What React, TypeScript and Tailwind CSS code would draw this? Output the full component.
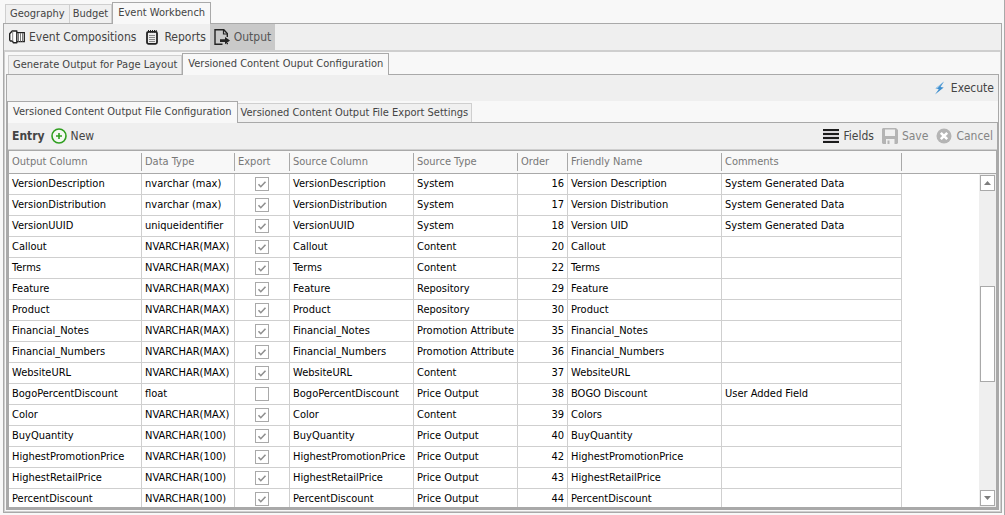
import type { ReactNode } from "react";

type Row = {
  column: string;
  type: string;
  exported: boolean;
  source: string;
  order: number;
  friendly: string;
  comment?: string;
};

const row = (
  column: string,
  type: string,
  source: string,
  order: number,
  friendly: string,
  comment = "",
  exported = true,
): Row => ({ column, type, source, order, friendly, comment, exported });

const rows: Row[] = [
  row("VersionDescription", "nvarchar (max)", "System", 16, "Version Description", "System Generated Data"),
  row("VersionDistribution", "nvarchar (max)", "System", 17, "Version Distribution", "System Generated Data"),
  row("VersionUUID", "uniqueidentifier", "System", 18, "Version UID", "System Generated Data"),
  row("Callout", "NVARCHAR(MAX)", "Content", 20, "Callout"),
  row("Terms", "NVARCHAR(MAX)", "Content", 22, "Terms"),
  row("Feature", "NVARCHAR(MAX)", "Repository", 29, "Feature"),
  row("Product", "NVARCHAR(MAX)", "Repository", 30, "Product"),
  row("Financial_Notes", "NVARCHAR(MAX)", "Promotion Attribute", 35, "Financial_Notes"),
  row("Financial_Numbers", "NVARCHAR(MAX)", "Promotion Attribute", 36, "Financial_Numbers"),
  row("WebsiteURL", "NVARCHAR(MAX)", "Content", 37, "WebsiteURL"),
  row("BogoPercentDiscount", "float", "Price Output", 38, "BOGO Discount", "User Added Field", false),
  row("Color", "NVARCHAR(MAX)", "Content", 39, "Colors"),
  row("BuyQuantity", "NVARCHAR(100)", "Price Output", 40, "BuyQuantity"),
  row("HighestPromotionPrice", "NVARCHAR(100)", "Price Output", 42, "HighestPromotionPrice"),
  row("HighestRetailPrice", "NVARCHAR(100)", "Price Output", 43, "HighestRetailPrice"),
  row("PercentDiscount", "NVARCHAR(100)", "Price Output", 44, "PercentDiscount"),
];

const columns = [
  { label: "Output Column", width: "w-[133px]" },
  { label: "Data Type", width: "w-[93px]" },
  { label: "Export", width: "w-[55px]" },
  { label: "Source Column", width: "w-[124px]" },
  { label: "Source Type", width: "w-[104px]" },
  { label: "Order", width: "w-[50px]" },
  { label: "Friendly Name", width: "w-[154px]" },
  { label: "Comments", width: "w-[180px]" },
];

function Tabs({ items, active, className = "" }: { items: string[]; active: string; className?: string }) {
  return (
    <div role="tablist" className={`flex h-[21px] shrink-0 items-end bg-[#f8f8f8] ${className}`}>
      {items.map((item) =>
        item === active ? (
          <button
            key={item}
            role="tab"
            aria-selected="true"
            className="z-10 -mb-px h-[22px] whitespace-nowrap border border-b-0 border-[#a9a9a9] bg-[#f8f8f8] px-[5px]"
          >
            {item}
          </button>
        ) : (
          <button
            key={item}
            role="tab"
            aria-selected="false"
            className="h-[19px] whitespace-nowrap border-t border-r border-[#cfcfcf] bg-[#f0f0f0] px-[3px] first:border-l first:px-1"
          >
            {item}
          </button>
        ),
      )}
    </div>
  );
}

function Tool({
  icon,
  children,
  active,
  disabled,
}: {
  icon: ReactNode;
  children: ReactNode;
  active?: boolean;
  disabled?: boolean;
}) {
  return (
    <button
      disabled={disabled}
      className={`flex h-full items-center gap-1 px-1 text-xs whitespace-nowrap disabled:text-[#858585] ${
        active ? "bg-[#c9c9c9] text-[#555]" : ""
      }`}
    >
      {icon}
      {children}
    </button>
  );
}

const BookIcon = () => (
  <svg width="16" height="16" viewBox="0 0 16 16" fill="none" stroke="#222" aria-hidden="true">
    <path d="M7.500 3.700h7.800v9H8" fill="#fff" strokeWidth="1.300" />
    <path d="M9.500 4v8.500M11.500 4v8.500M13.500 4v8.500" stroke="#777" />
    <path d="M3.200 2h4.600v11.700H4.300L3.500 12H1.300L.7 11V4.800z" strokeWidth="1.400" fill="#fff" strokeLinejoin="round" />
    <path d="M3.700 2.500v9.500" stroke="#888" />
  </svg>
);

const NotepadIcon = () => (
  <svg width="16" height="16" viewBox="0 0 16 16" fill="none" stroke="#222" aria-hidden="true">
    <rect x="3" y="2.800" width="10" height="12" rx="1.500" strokeWidth="1.800" fill="#ececec" />
    <path d="M4.500 1v2.500M6.500 1v2.500M8.500 1v2.500M10.500 1v2.500M12.200 1v2" strokeWidth="1" />
    <path d="M5 6.500h6M5 8.500h6M5 10.500h6M5 12.500h6" stroke="#888" />
  </svg>
);

const OutputIcon = () => (
  <svg width="16" height="16" viewBox="0 0 16 16" fill="none" stroke="#222" aria-hidden="true">
    <path d="M13.300 8V4.500L9.800.8H1v14.400h7.500M13.300 15.200V14" strokeWidth="1.400" />
    <path d="M9.500 1v4h4" strokeWidth="1.200" />
    <path d="M6 10.200h5V8l5 3.600-5 3.600V13H6z" fill="#222" stroke="none" />
  </svg>
);

const BoltIcon = () => (
  <svg width="16" height="16" viewBox="0 0 16 16" aria-hidden="true">
    <path d="M13 1.500 4.500 8.500l3.300.7L4 14.500l8.700-7-3.200-.6z" fill="#3f8fcf" />
    <path d="M13 1.500 4.500 8.500l1.500.3z" fill="#a5cdec" />
  </svg>
);

const AddIcon = () => (
  <svg width="16" height="16" viewBox="0 0 16 16" fill="none" stroke="#2f9e1f" aria-hidden="true">
    <circle cx="8" cy="8" r="7" strokeWidth="1.600" fill="#f4f8f3" />
    <path d="M5 8h6M8 5v6" strokeWidth="1.600" />
  </svg>
);

const FieldsIcon = () => (
  <svg width="16" height="16" viewBox="0 0 16 16" stroke="#1c1c1c" strokeWidth="2" aria-hidden="true">
    <path d="M0 2h16M0 6h16M0 10h16M0 14h16" />
    <path d="M0 4h16M0 8h16M0 12h16" stroke="#c5c0c8" strokeWidth="1" />
  </svg>
);

const SaveIcon = () => (
  <svg width="16" height="16" viewBox="0 0 16 16" aria-hidden="true">
    <path d="M1 0h13l2 2v13l-1 1H1l-1-1V1z" fill="#b4b4b4" />
    <path d="M3 1.500h10V8H3zM4 11h8.500v5H4z" fill="#f0f0f0" />
    <path d="M5.500 12.500H7.500V16H5.500z" fill="#b4b4b4" />
  </svg>
);

const CancelIcon = () => (
  <svg width="16" height="16" viewBox="0 0 16 16" aria-hidden="true">
    <circle cx="8" cy="8" r="7.500" fill="#b4b4b4" />
    <path d="m4.800 4.800 6.400 6.400M11.200 4.800l-6.400 6.400" stroke="#fff" strokeWidth="2.600" />
  </svg>
);

function ExportBox({ row }: { row: Row }) {
  return (
    <label className="grid place-items-center">
      <input
        type="checkbox"
        defaultChecked={row.exported}
        aria-label={`Export ${row.column}`}
        className="peer col-start-1 row-start-1 size-3.5 appearance-none border border-[#a9a9a9] bg-white"
      />
      <svg
        viewBox="0 0 14 14"
        className="pointer-events-none invisible col-start-1 row-start-1 size-3.5 peer-checked:visible"
        fill="none"
        stroke="#8f8f8f"
        strokeWidth="1.600"
        aria-hidden="true"
      >
        <path d="m3.500 7.300 2.300 2.400 4.700-5" />
      </svg>
    </label>
  );
}

function ScrollBar() {
  return (
    <div className="col-start-1 row-start-1 mt-[23px] flex w-[17px] flex-col items-center justify-self-end bg-[#efefef] py-px">
      <button
        aria-label="Scroll up"
        className="flex h-4 w-[15px] shrink-0 items-center justify-center border border-[#a9a9a9] bg-white"
      >
        <svg width="7" height="4" viewBox="0 0 7 4" fill="#7d7d7d" aria-hidden="true">
          <path d="M3.500 0 7 4H0z" />
        </svg>
      </button>
      <div className="flex-[96]" />
      <div className="w-[15px] flex-[94] border border-[#a9a9a9] bg-white" />
      <div className="flex-[109]" />
      <button
        aria-label="Scroll down"
        className="flex h-4 w-[15px] shrink-0 items-center justify-center border border-[#a9a9a9] bg-white"
      >
        <svg width="7" height="4" viewBox="0 0 7 4" fill="#7d7d7d" aria-hidden="true">
          <path d="M3.500 4 0 0h7z" />
        </svg>
      </button>
    </div>
  );
}

const cell = "h-[21px] border-r border-b border-[#cfcfcf] p-0 px-[3px] leading-5 whitespace-nowrap";

function OutputGrid() {
  return (
    <div className="grid min-h-0 flex-1 overflow-hidden border border-[#a9a9a9] bg-white">
      <div className="col-start-1 row-start-1 min-h-0 overflow-hidden">
        <table className="w-full table-fixed border-separate border-spacing-0 text-black">
          <thead>
            <tr className="bg-[#f8f8f8] text-left text-[#777]">
              {columns.map((c) => (
                <th
                  key={c.label}
                  scope="col"
                  className={`h-[23px] border-b border-[#a9a9a9] p-0 font-normal whitespace-nowrap ${c.width}`}
                >
                  <div className="border-r border-[#a9a9a9] px-[3px] leading-[18px]">{c.label}</div>
                </th>
              ))}
              <td className="border-b border-[#a9a9a9] p-0" />
            </tr>
          </thead>
          <tbody>
            {rows.map((r) => (
              <tr key={r.column}>
                <td className={cell}>{r.column}</td>
                <td className={cell}>{r.type}</td>
                <td className={cell}>
                  <ExportBox row={r} />
                </td>
                <td className={cell}>{r.column}</td>
                <td className={cell}>{r.source}</td>
                <td className={`${cell} text-right`}>{r.order}</td>
                <td className={cell}>{r.friendly}</td>
                <td className={cell}>{r.comment}</td>
                <td className="p-0" />
              </tr>
            ))}
          </tbody>
        </table>
      </div>
      <ScrollBar />
    </div>
  );
}

export default function App() {
  return (
    <div className="flex h-screen flex-col border-r border-[#a9a9a9] bg-[#f8f8f8] pt-0.5 pr-0.5 pb-0.5 pl-[3px] font-['DejaVu_Sans_Condensed','DejaVu_Sans',sans-serif] text-[11px] text-[#444]">
      <Tabs items={["Geography", "Budget", "Event Workbench"]} active="Event Workbench" className="pl-0.5" />
      <main className="flex min-h-0 flex-1 flex-col border border-[#a9a9a9]">
        <div className="flex h-[26px] shrink-0 bg-[#efefef] pl-px">
          <Tool icon={<BookIcon />}>Event Compositions</Tool>
          <Tool icon={<NotepadIcon />}>Reports</Tool>
          <Tool icon={<OutputIcon />} active>
            Output
          </Tool>
        </div>
        <div className="flex min-h-0 flex-1 flex-col border border-t-2 border-[#cfcfcf] p-px">
          <Tabs
            items={["Generate Output for Page Layout", "Versioned Content Ouput Configuration"]}
            active="Versioned Content Ouput Configuration"
            className="pl-0.5"
          />
          <section className="flex min-h-0 flex-1 flex-col border border-[#a9a9a9]">
            <div className="flex h-[26px] shrink-0 justify-end bg-[#efefef]">
              <Tool icon={<BoltIcon />}>Execute</Tool>
            </div>
            <Tabs
              items={[
                "Versioned Content Output File Configuration",
                "Versioned Content Output File Export Settings",
              ]}
              active="Versioned Content Output File Configuration"
            />
            <section className="flex min-h-0 flex-1 flex-col border border-[#a9a9a9]">
              <div className="flex h-[27px] shrink-0 items-center border-b border-[#cfcfcf] bg-[#efefef] pl-1">
                <h2 className="mr-0.5 text-xs font-bold">Entry</h2>
                <Tool icon={<AddIcon />}>New</Tool>
                <div className="ml-auto flex h-full">
                  <Tool icon={<FieldsIcon />}>Fields</Tool>
                  <Tool icon={<SaveIcon />} disabled>
                    Save
                  </Tool>
                  <Tool icon={<CancelIcon />} disabled>
                    Cancel
                  </Tool>
                </div>
              </div>
              <OutputGrid />
            </section>
          </section>
        </div>
      </main>
    </div>
  );
}
